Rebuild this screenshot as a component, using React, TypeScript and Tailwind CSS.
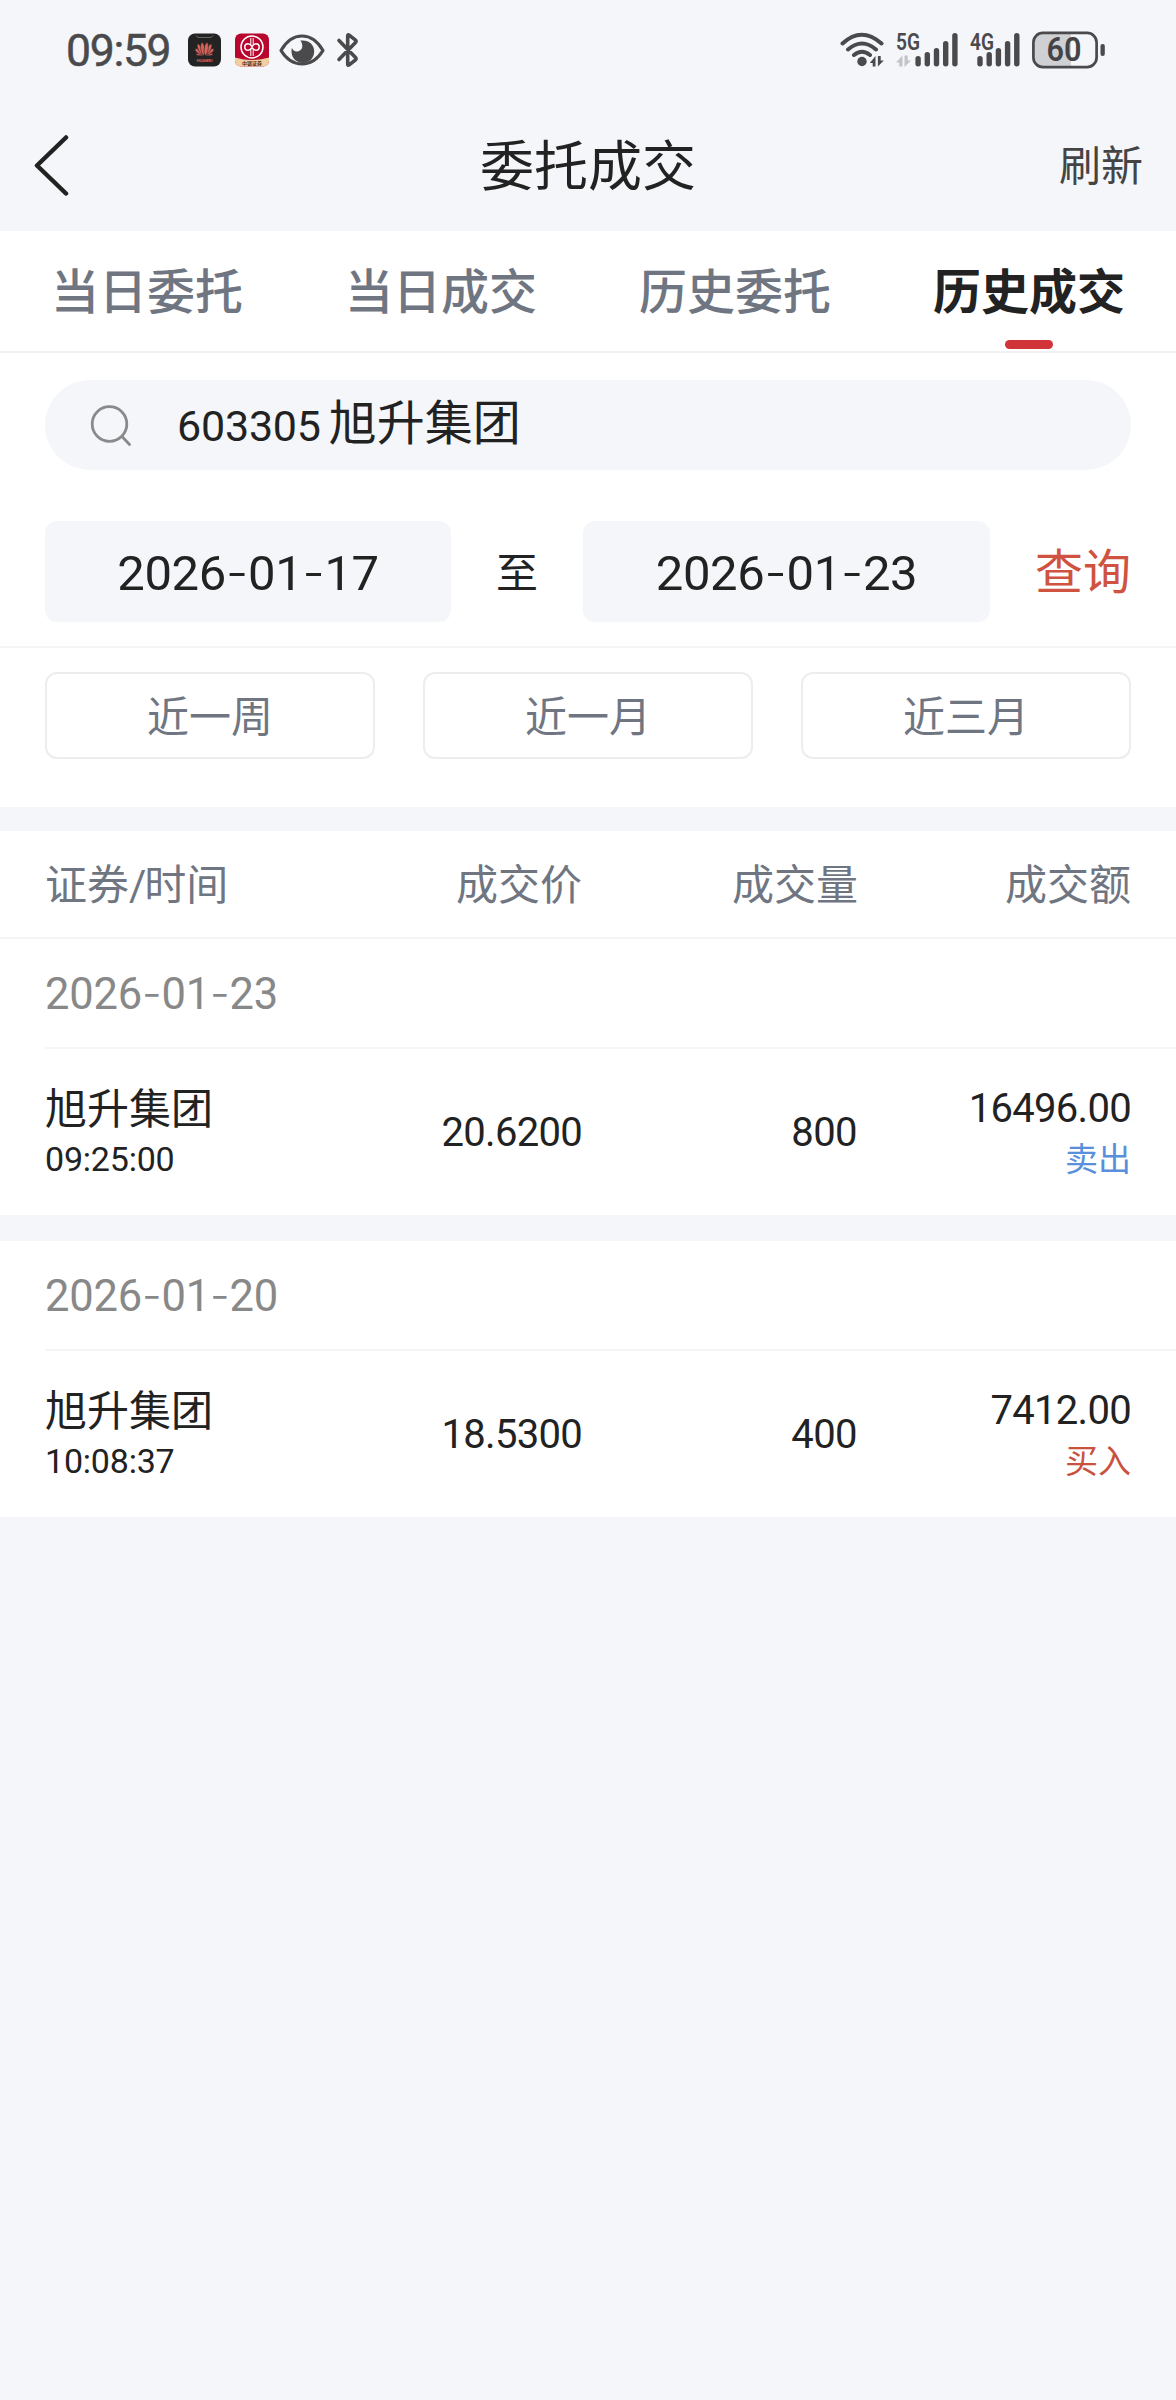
import { useState } from "react";
import clsx from "clsx";

const TABS = ["当日委托", "当日成交", "历史委托", "历史成交"];
const RANGES = ["近一周", "近一月", "近三月"];

type Deal = {
  name: string;
  time: string;
  price: string;
  volume: string;
  amount: string;
  side: "buy" | "sell";
};

const GROUPS: { date: string; deals: Deal[] }[] = [
  {
    date: "2026-01-23",
    deals: [
      { name: "旭升集团", time: "09:25:00", price: "20.6200", volume: "800", amount: "16496.00", side: "sell" },
    ],
  },
  {
    date: "2026-01-20",
    deals: [
      { name: "旭升集团", time: "10:08:37", price: "18.5300", volume: "400", amount: "7412.00", side: "buy" },
    ],
  },
];

// Roboto's hyphen is too short between digits, Inter has a wider one
function DateText({ value }: { value: string }) {
  const [y, m, d] = value.split("-");
  return (
    <span>
      {y}
      <span className="font-['Inter'] font-light">-</span>
      {m}
      <span className="font-['Inter'] font-light">-</span>
      {d}
    </span>
  );
}

function SignalBars({ x }: { x: number }) {
  const tops = [24, 20, 16, 9, 1];
  return (
    <>
      {tops.map((top, i) => (
        <rect key={top} x={x + i * 9.2} y={top} width="5.4" height={34.5 - top} rx="2.7" />
      ))}
    </>
  );
}

function StatusBar() {
  return (
    <div className="flex h-[100px] items-center justify-between pl-[66px] pr-[71px] text-[#4a4a4c]">
      <div className="flex items-center">
        <span className="w-[122px] pt-px text-[44.5px] leading-[50px] tracking-[-1.3px] [-webkit-text-stroke:0.5px_currentColor]">
          09:59
        </span>

        <svg width="33" height="34" viewBox="0 0 33 34">
          <rect width="33" height="33" y="0.5" rx="7" fill="#232323" />
          <path d="M8 2.5q1 2 3 2h11q2 0 3-2" fill="none" stroke="#777" strokeWidth="0.8" />
          <g fill="#d9645c" stroke="#232323" strokeWidth="0.6">
            <ellipse cx="11.8" cy="21.6" rx="1.2" ry="3.8" transform="rotate(-84 11.8 21.6)" />
            <ellipse cx="21.2" cy="21.6" rx="1.2" ry="3.8" transform="rotate(84 21.2 21.6)" />
            <ellipse cx="11" cy="18.8" rx="1.8" ry="4.8" transform="rotate(-54 11 18.8)" />
            <ellipse cx="22" cy="18.8" rx="1.8" ry="4.8" transform="rotate(54 22 18.8)" />
            <ellipse cx="12.4" cy="16.4" rx="2" ry="6" transform="rotate(-28 12.4 16.4)" />
            <ellipse cx="20.6" cy="16.4" rx="2" ry="6" transform="rotate(28 20.6 16.4)" />
            <ellipse cx="14.8" cy="15.8" rx="2" ry="6.4" transform="rotate(-8 14.8 15.8)" />
            <ellipse cx="18.2" cy="15.8" rx="2" ry="6.4" transform="rotate(8 18.2 15.8)" />
          </g>
          <text x="16.5" y="28.8" fontSize="4.4" fontWeight="700" textAnchor="middle" textLength="16" fill="#d9645c">
            HUAWEI
          </text>
        </svg>

        <svg className="ml-[14px]" width="34" height="34" viewBox="0 0 34 34">
          <clipPath id="broker">
            <rect width="34" height="33" y="0.5" rx="6" />
          </clipPath>
          <g clipPath="url(#broker)">
            <rect width="34" height="34" fill="#b9062f" />
            <path d="M0 24.5q17 5 34 0V34H0z" fill="#f0cfa0" />
          </g>
          <g fill="none" stroke="#fff" strokeWidth="1.5">
            <circle cx="17" cy="14" r="11" />
            <path d="M17.500 14c-1.600 2.400-2.600 3.300-4.400 3.300a3.300 3.300 0 0 1 0-6.600c1.800 0 2.800.9 4.400 3.300M16.500 14c1.600-2.400 2.600-3.300 4.400-3.300a3.300 3.300 0 0 1 0 6.600c-1.800 0-2.800-.9-4.400-3.300" />
            <path d="M15.800 5v6.500M18.200 5v6.500M15.800 16.500V23M18.200 16.500V23" strokeWidth="1" />
          </g>
          <text x="17" y="31.8" fontSize="5" fontWeight="700" textAnchor="middle" fill="#5a2a18">
            中银证券
          </text>
        </svg>

        <svg className="ml-[10px]" width="46" height="34" viewBox="0 0 46 34">
          <path
            d="M2 17.500C7.500 8 14.500 3 23 3s15.500 5 21 14.500C38.500 26.500 31.500 31 23 31S7.500 26.500 2 17.500z"
            fill="none"
            stroke="currentColor"
            strokeWidth="3.200"
            strokeLinejoin="round"
          />
          <path
            d="M21.300 7.600C29.500 6.500 35.200 11.500 35.200 18.300S30 30 24 30c-6.500 0-11.500-5-11.500-11.500 0-1.500.1-2.500.5-3.500.9 2.300 2.500 3.500 4.700 3.500 3.200 0 5.600-2.300 5.600-5.500 0-2-.7-3.900-2-5.400z"
            fill="currentColor"
          />
        </svg>

        <svg className="ml-[11px]" width="24" height="36" viewBox="0 0 24 36">
          <path
            d="M3 8.500 19.500 25.500q1.200 1.300 0 2.300l-6.300 5q-1.500 1-1.500-.8V4q0-1.800 1.500-.8l6.300 5q1.200 1 0 2.300L3 27.500"
            fill="none"
            stroke="currentColor"
            strokeWidth="3.600"
            strokeLinecap="round"
            strokeLinejoin="round"
          />
        </svg>
      </div>

      <div className="flex items-center gap-3">
        <svg width="44" height="36" viewBox="0 0 44 36" fill="none" stroke="currentColor" strokeWidth="4" strokeLinecap="round">
          <path d="M2.500 11.500Q21.500-6 41.500 11.500M8 17.500q14-12 28 0M14 23q8-6.500 16 0" />
          <circle cx="22" cy="29.500" r="4.700" fill="currentColor" stroke="none" />
          <path d="M29.800 31l5.700-7v10.500h-2.800V31zM43.800 28.500l-5.900 6V24h2.800v4.500z" fill="currentColor" stroke="none" />
        </svg>

        <svg className="overflow-visible" width="62" height="36" viewBox="0 0 62 36" fill="currentColor">
          <text x="0" y="17.500" fontSize="23" fontWeight="600" textLength="24" lengthAdjust="spacingAndGlyphs">
            5G
          </text>
          <path d="M0 30.500l6.500-7v11H3.200v-4zM15 28.500l-6.500 6.500V23.500h3.200v5z" fill="#c3c4c8" />
          <SignalBars x={19.4} />
        </svg>

        <svg className="overflow-visible" width="50" height="36" viewBox="0 0 50 36" fill="currentColor">
          <text x="0" y="17.500" fontSize="23" fontWeight="600" textLength="24" lengthAdjust="spacingAndGlyphs">
            4G
          </text>
          <SignalBars x={7.3} />
        </svg>

        <svg width="73" height="38" viewBox="0 0 73 38">
          <path d="M11 2h28v34H11a9.500 9.500 0 0 1-9.500-9.500v-15A9.500 9.500 0 0 1 11 2z" fill="#cfd0d4" />
          <rect x="1.400" y="1.900" width="63.200" height="34.200" rx="9.500" fill="none" stroke="currentColor" strokeWidth="2.700" />
          <rect x="68.500" y="13" width="4.300" height="12" rx="2" fill="currentColor" />
          <text x="32" y="30.300" fontSize="32.500" fontWeight="600" textAnchor="middle" textLength="35" lengthAdjust="spacingAndGlyphs" fill="#444446">
            60
          </text>
        </svg>
      </div>
    </div>
  );
}

function DealRow({ deal }: { deal: Deal }) {
  return (
    <div className="flex h-[166px] items-center px-[45px] pt-[2px] text-[#222]">
      <div className="w-[261px]">
        <p className="text-[42px] leading-[52px]">{deal.name}</p>
        <p className="text-[34px] leading-[46px] tracking-[-0.2px]">{deal.time}</p>
      </div>
      <p className="w-[276px] text-right text-[40px] leading-[50px] tracking-[-0.7px]">{deal.price}</p>
      <p className="w-[275px] text-right text-[40px] leading-[50px] tracking-[-0.6px]">{deal.volume}</p>
      <div className="flex-1 text-right">
        <p className="text-[40px] leading-[50px] tracking-[-0.7px]">{deal.amount}</p>
        <p
          className={clsx(
            "pt-[3px] text-[33px] leading-[46px]",
            deal.side === "sell" ? "text-[#5a8fdb]" : "text-[#c9523f]"
          )}
        >
          {deal.side === "sell" ? "卖出" : "买入"}
        </p>
      </div>
    </div>
  );
}

export default function App() {
  const [tab, setTab] = useState("历史成交");

  return (
    <div className="h-[2400px] w-[1176px] bg-[#f4f6fa] font-['Roboto','Noto_Sans_CJK_SC',sans-serif]">
      <StatusBar />

      <header className="grid h-[131px] grid-cols-3 items-center px-[33px]">
        <button>
          <svg width="38" height="62" viewBox="0 0 38 62" fill="none" stroke="#222" strokeWidth="4.500" strokeLinecap="round" strokeLinejoin="round">
            <path d="M33 2.500 4 30.500l29 28" />
          </svg>
        </button>
        <h1 className="pt-[5px] text-center text-[54px] leading-[60px] text-[#222]">委托成交</h1>
        <button className="pt-[2px] text-right text-[42px] leading-[50px] text-[#444]">刷新</button>
      </header>

      <nav className="grid h-[122px] grid-cols-4 border-b-2 border-[#f0f1f2] bg-white">
        {TABS.map((t) => (
          <button
            key={t}
            onClick={() => setTab(t)}
            className={clsx(
              "flex flex-col items-center justify-between pt-8 pb-[2px] text-[48px] leading-[60px]",
              t === tab ? "font-bold text-[#222]" : "font-medium text-[#6f7682]"
            )}
          >
            {t}
            {t === tab && <span className="h-[9px] w-12 rounded-full bg-[#d13438]" />}
          </button>
        ))}
      </nav>

      <section className="bg-white pt-[27px]">
        <div className="mx-[45px] flex h-[90px] items-center rounded-full bg-[#f4f6fa] pl-[45px] text-[#222]">
          <svg width="42" height="42" viewBox="0 0 42 42" fill="none" stroke="#8a8a8a" strokeWidth="2.800" strokeLinecap="round">
            <circle cx="19.500" cy="20" r="17.300" />
            <path d="m32 32.500 7.500 8" />
          </svg>
          <span className="ml-[45px] pt-[2px] text-[43px] leading-[60px] tracking-[-0.2px]">603305</span>
          <span className="ml-2 pb-[2px] text-[48px] leading-[60px]">旭升集团</span>
        </div>

        <div className="mt-[51px] flex h-[101px] items-center px-[45px] text-[#222]">
          <div className="flex h-full w-[406px] items-center justify-center rounded-xl bg-[#f4f6fa] pt-[4px] text-[49px] tracking-[-0.3px]">
            <DateText value="2026-01-17" />
          </div>
          <span className="w-[132px] pt-[5px] text-center text-[42px] leading-[50px]">至</span>
          <div className="flex h-full w-[407px] items-center justify-center rounded-xl bg-[#f4f6fa] pt-[4px] text-[49px] tracking-[-0.3px]">
            <DateText value="2026-01-23" />
          </div>
          <button className="flex-1 pt-[3px] text-right text-[48px] leading-[60px] text-[#cf5340]">查询</button>
        </div>

        <div className="mt-6 grid h-[161px] grid-cols-3 gap-12 border-t-2 border-[#f4f5f6] px-[45px] pt-6">
          {RANGES.map((r) => (
            <button
              key={r}
              className="h-[87px] rounded-xl border-2 border-[#ebedee] pt-[4px] text-[42px] leading-[50px] text-[#6f7682]"
            >
              {r}
            </button>
          ))}
        </div>
      </section>

      <div className="mt-6 flex h-[108px] items-center border-b-2 border-[#f4f5f6] bg-white px-[45px] pt-[3px] text-[42px] leading-[50px] text-[#6f7682]">
        <span className="w-[261px]">
          证券<span className="tracking-[-2px]">/</span>时间
        </span>
        <span className="w-[276px] text-right">成交价</span>
        <span className="w-[276px] text-right">成交量</span>
        <span className="flex-1 text-right">成交额</span>
      </div>

      <div className="flex flex-col gap-[26px]">
        {GROUPS.map((g) => (
          <section key={g.date} className="bg-white">
            <div className="ml-[45px] flex h-[110px] items-center border-b-2 border-[#f4f5f6] pt-[3px] text-[43.5px] tracking-[-0.2px] text-[#888]">
              <DateText value={g.date} />
            </div>
            {g.deals.map((d) => (
              <DealRow key={d.time} deal={d} />
            ))}
          </section>
        ))}
      </div>
    </div>
  );
}
